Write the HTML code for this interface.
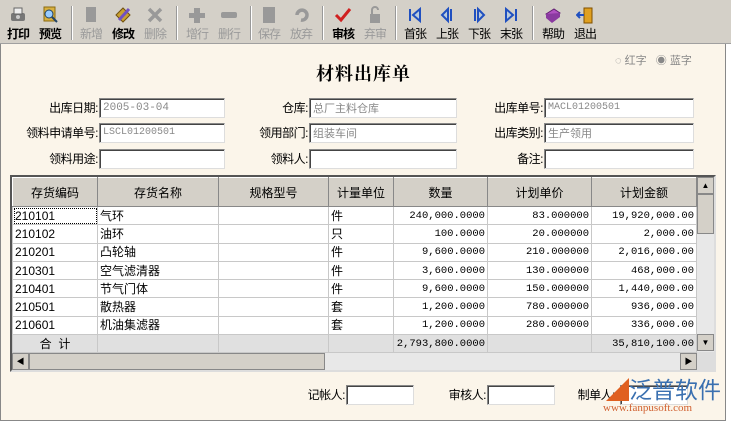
<!DOCTYPE html>
<html><head><meta charset="utf-8"><style>
*{box-sizing:border-box;margin:0;padding:0}
body{width:731px;height:424px;background:#fff;font-family:"Liberation Sans","Noto Sans CJK SC",sans-serif;font-size:12px;position:relative;overflow:hidden;color:#000}
.a{position:absolute}
#tb{left:0;top:0;width:731px;height:44px;background:#d4d0c8;border-bottom:1px solid #a0a0a0}
.btn{position:absolute;top:4px;width:34px;text-align:center;font-size:12px;line-height:14px;white-space:nowrap;letter-spacing:-1px}
.btn .ic{display:block;width:18px;height:18px;margin:2px auto 3px;}
.dis{color:#9a9a9a}
.sep{position:absolute;top:6px;width:2px;height:34px;border-left:1px solid #999;border-right:1px solid #fff}
#body{left:0;top:44px;width:726px;height:377px;background:#fbf5ea;border:1px solid #888;border-top:none}
.lbl{position:absolute;font-size:12px;text-align:right;height:20px;line-height:20px;letter-spacing:-0.5px}
.inp{position:absolute;height:20px;background:#fff;border:1px solid #888;border-right-color:#ddd;border-bottom-color:#ddd;box-shadow:inset 1px 1px 0 #444;color:#888;font-size:11px;line-height:18px;padding-left:3px;font-family:"Liberation Mono","Noto Sans CJK SC",monospace}
#grid{left:10px;top:175px;width:706px;height:197px;border:2px solid #555;border-right-color:#ddd;border-bottom-color:#ddd;background:#ddd;overflow:hidden}
table{border-collapse:collapse;position:absolute;left:0;top:0;font-size:12px;table-layout:fixed}
td{border:1px solid #c8c8c8;height:18.3px;line-height:16px;padding:0 2px;white-space:nowrap;overflow:hidden;background:#fff;font-family:"Liberation Sans","Noto Sans CJK SC",sans-serif}
th{background:#d4d0c8;height:29px;font-weight:normal;border:1px solid #888;border-top-color:#fff;border-left-color:#fff}
td.n{text-align:right;font-family:"Liberation Mono",monospace;font-size:10.5px}
tr.tot td{background:#e0e0e0}
</style></head><body>
<div id="tb" class="a">
 <div class="btn" style="left:1px"><svg class="ic" viewBox="0 0 18 18"><rect x="2" y="7" width="14" height="8" rx="2" fill="#777"/><rect x="5" y="2" width="8" height="6" fill="#eee" stroke="#666"/><circle cx="9" cy="11" r="2" fill="#ccc"/></svg><b>打印</b></div>
 <div class="btn" style="left:33px"><svg class="ic" viewBox="0 0 18 18"><rect x="3" y="1" width="11" height="14" fill="#d8b040" stroke="#8a6a10"/><circle cx="8" cy="8" r="4" fill="#9cf" stroke="#246"/><path d="M11 11l5 5" stroke="#246" stroke-width="2"/></svg><b>预览</b></div>
 <div class="sep" style="left:71px"></div>
 <div class="btn dis" style="left:74px"><svg class="ic" viewBox="0 0 18 18"><rect x="4" y="1" width="10" height="15" fill="#999"/></svg>新增</div>
 <div class="btn" style="left:106px"><svg class="ic" viewBox="0 0 18 18"><path d="M2 9l7-7 7 7-7 7z" fill="#c9a030" stroke="#705010"/><path d="M5 14L15 3" stroke="#7050c0" stroke-width="3"/></svg><b>修改</b></div>
 <div class="btn dis" style="left:138px"><svg class="ic" viewBox="0 0 18 18"><path d="M3 3l12 12M15 3L3 15" stroke="#999" stroke-width="3.5"/></svg>删除</div>
 <div class="sep" style="left:176px"></div>
 <div class="btn dis" style="left:180px"><svg class="ic" viewBox="0 0 18 18"><path d="M6 2h6v5h5v5h-5v5H6v-5H1V7h5z" fill="#999"/></svg>增行</div>
 <div class="btn dis" style="left:212px"><svg class="ic" viewBox="0 0 18 18"><rect x="1" y="6" width="16" height="6" rx="2" fill="#999"/></svg>删行</div>
 <div class="sep" style="left:250px"></div>
 <div class="btn dis" style="left:252px"><svg class="ic" viewBox="0 0 18 18"><rect x="3" y="1" width="12" height="16" fill="#999"/></svg>保存</div>
 <div class="btn dis" style="left:284px"><svg class="ic" viewBox="0 0 18 18"><path d="M5 9a5 5 0 1 1 4 5" stroke="#999" stroke-width="3.5" fill="none"/></svg>放弃</div>
 <div class="sep" style="left:322px"></div>
 <div class="btn" style="left:326px"><svg class="ic" viewBox="0 0 18 18"><path d="M2 9l5 5 9-11" stroke="#d02020" stroke-width="3" fill="none"/></svg><b>审核</b></div>
 <div class="btn dis" style="left:358px"><svg class="ic" viewBox="0 0 18 18"><rect x="4" y="8" width="10" height="9" fill="#999"/><path d="M6 8V4a3 3 0 0 1 6 0" stroke="#999" stroke-width="2" fill="none"/></svg>弃审</div>
 <div class="sep" style="left:395px"></div>
 <div class="btn" style="left:398px"><svg class="ic" viewBox="0 0 18 18"><path d="M4 3v12M14 3L7 9l7 6z" stroke="#2050c0" stroke-width="2" fill="#bcd"/></svg>首张</div>
 <div class="btn" style="left:430px"><svg class="ic" viewBox="0 0 18 18"><path d="M10 3L4 9l6 6zM13 3v12" stroke="#2050c0" stroke-width="2" fill="#bcd"/></svg>上张</div>
 <div class="btn" style="left:462px"><svg class="ic" viewBox="0 0 18 18"><path d="M8 3l6 6-6 6zM5 3v12" stroke="#2050c0" stroke-width="2" fill="#bcd"/></svg>下张</div>
 <div class="btn" style="left:494px"><svg class="ic" viewBox="0 0 18 18"><path d="M4 3l7 6-7 6zM14 3v12" stroke="#2050c0" stroke-width="2" fill="#bcd"/></svg>末张</div>
 <div class="sep" style="left:532px"></div>
 <div class="btn" style="left:536px"><svg class="ic" viewBox="0 0 18 18"><path d="M2 8l8-5 6 4-8 6z" fill="#b050c0" stroke="#602070"/><path d="M2 8v4l6 5 8-6V7" fill="#8a3aa0"/></svg>帮助</div>
 <div class="btn" style="left:568px"><svg class="ic" viewBox="0 0 18 18"><rect x="8" y="2" width="8" height="15" fill="#e0a020" stroke="#805000"/><path d="M1 9h7M4 6l-3 3 3 3" stroke="#2050c0" stroke-width="2" fill="none"/></svg>退出</div>
</div>
<div id="body" class="a">
 <div class="a" style="left:315px;top:16px;font-size:18px;font-weight:bold;letter-spacing:1px;font-family:'Noto Serif CJK SC','Noto Sans CJK SC',serif">材料出库单</div>
 <div class="a" style="left:614px;top:8px;font-size:11px;color:#888">◌ 红字 &nbsp;&nbsp;◉ 蓝字</div>
</div>
<div class="lbl" style="left:20px;top:98px;width:78px">出库日期:</div><div class="inp" style="left:99px;top:98px;width:126px">2005-03-04</div>
<div class="lbl" style="left:240px;top:98px;width:68px">仓库:</div><div class="inp" style="left:309px;top:98px;width:148px;font-family:'Noto Sans CJK SC',sans-serif">总厂主料仓库</div>
<div class="lbl" style="left:470px;top:98px;width:73px">出库单号:</div><div class="inp" style="left:544px;top:98px;width:150px;font-size:10px">MACL01200501</div>
<div class="lbl" style="left:10px;top:123px;width:88px">领料申请单号:</div><div class="inp" style="left:99px;top:123px;width:126px;font-size:10px">LSCL01200501</div>
<div class="lbl" style="left:230px;top:123px;width:78px">领用部门:</div><div class="inp" style="left:309px;top:123px;width:148px;font-family:'Noto Sans CJK SC',sans-serif">组装车间</div>
<div class="lbl" style="left:470px;top:123px;width:73px">出库类别:</div><div class="inp" style="left:544px;top:123px;width:150px;font-family:'Noto Sans CJK SC',sans-serif">生产领用</div>
<div class="lbl" style="left:20px;top:149px;width:78px">领料用途:</div><div class="inp" style="left:99px;top:149px;width:126px"></div>
<div class="lbl" style="left:230px;top:149px;width:78px">领料人:</div><div class="inp" style="left:309px;top:149px;width:148px"></div>
<div class="lbl" style="left:470px;top:149px;width:73px">备注:</div><div class="inp" style="left:544px;top:149px;width:150px"></div>
<div id="grid" class="a">
<table style="width:684px">
<colgroup><col style="width:85px"><col style="width:121px"><col style="width:110px"><col style="width:65px"><col style="width:94px"><col style="width:104px"><col style="width:105px"></colgroup>
<tr><th>存货编码</th><th>存货名称</th><th>规格型号</th><th>计量单位</th><th>数量</th><th>计划单价</th><th>计划金额</th></tr>
<tr><td style="outline:1px dotted #000;outline-offset:-2px">210101</td><td>气环</td><td></td><td>件</td><td class="n">240,000.0000</td><td class="n">83.000000</td><td class="n">19,920,000.00</td></tr>
<tr><td>210102</td><td>油环</td><td></td><td>只</td><td class="n">100.0000</td><td class="n">20.000000</td><td class="n">2,000.00</td></tr>
<tr><td>210201</td><td>凸轮轴</td><td></td><td>件</td><td class="n">9,600.0000</td><td class="n">210.000000</td><td class="n">2,016,000.00</td></tr>
<tr><td>210301</td><td>空气滤清器</td><td></td><td>件</td><td class="n">3,600.0000</td><td class="n">130.000000</td><td class="n">468,000.00</td></tr>
<tr><td>210401</td><td>节气门体</td><td></td><td>件</td><td class="n">9,600.0000</td><td class="n">150.000000</td><td class="n">1,440,000.00</td></tr>
<tr><td>210501</td><td>散热器</td><td></td><td>套</td><td class="n">1,200.0000</td><td class="n">780.000000</td><td class="n">936,000.00</td></tr>
<tr><td>210601</td><td>机油集滤器</td><td></td><td>套</td><td class="n">1,200.0000</td><td class="n">280.000000</td><td class="n">336,000.00</td></tr>
<tr class="tot"><td style="text-align:center">合 &nbsp;计</td><td></td><td></td><td></td><td class="n">2,793,800.0000</td><td></td><td class="n">35,810,100.00</td></tr>
</table>
<div class="a" style="left:685px;top:0;width:17px;height:175px;background:#e8e8e8"><div style="height:17px;background:#d4d0c8;border:1px solid #888;font-size:8px;text-align:center;line-height:15px">▲</div><div style="height:40px;background:#d4d0c8;border:1px solid #888"></div><div style="position:absolute;top:157px;width:17px;height:17px;background:#d4d0c8;border:1px solid #888;font-size:8px;text-align:center;line-height:15px">▼</div></div>
<div class="a" style="left:0;top:176px;width:685px;height:17px;background:#e8e8e8"><div style="position:absolute;left:0;width:17px;height:17px;background:#d4d0c8;border:1px solid #888;font-size:8px;line-height:15px;text-align:center">◀</div><div style="position:absolute;left:17px;width:296px;height:17px;background:#d4d0c8;border:1px solid #888"></div><div style="position:absolute;left:668px;width:17px;height:17px;background:#d4d0c8;border:1px solid #888;font-size:8px;line-height:15px;text-align:center">▶</div></div>
</div>
<div class="lbl" style="left:290px;top:385px;width:55px">记帐人:</div><div class="inp" style="left:346px;top:385px;width:68px"></div>
<div class="lbl" style="left:430px;top:385px;width:56px">审核人:</div><div class="inp" style="left:487px;top:385px;width:68px"></div>
<div class="lbl" style="left:575px;top:385px;width:40px">制单人:</div><div class="inp" style="left:620px;top:385px;width:68px"></div>
<div class="a" style="left:606px;top:374px;font-size:23px;color:#3a70b0;font-family:'Noto Sans CJK SC',sans-serif;line-height:28px"><span style="color:#e06020">◢</span>泛普软件</div>
<div class="a" style="left:603px;top:402px;font-size:11px;color:#d06030;font-family:'Liberation Serif',serif">www.fanpusoft.com</div>
</body></html>
